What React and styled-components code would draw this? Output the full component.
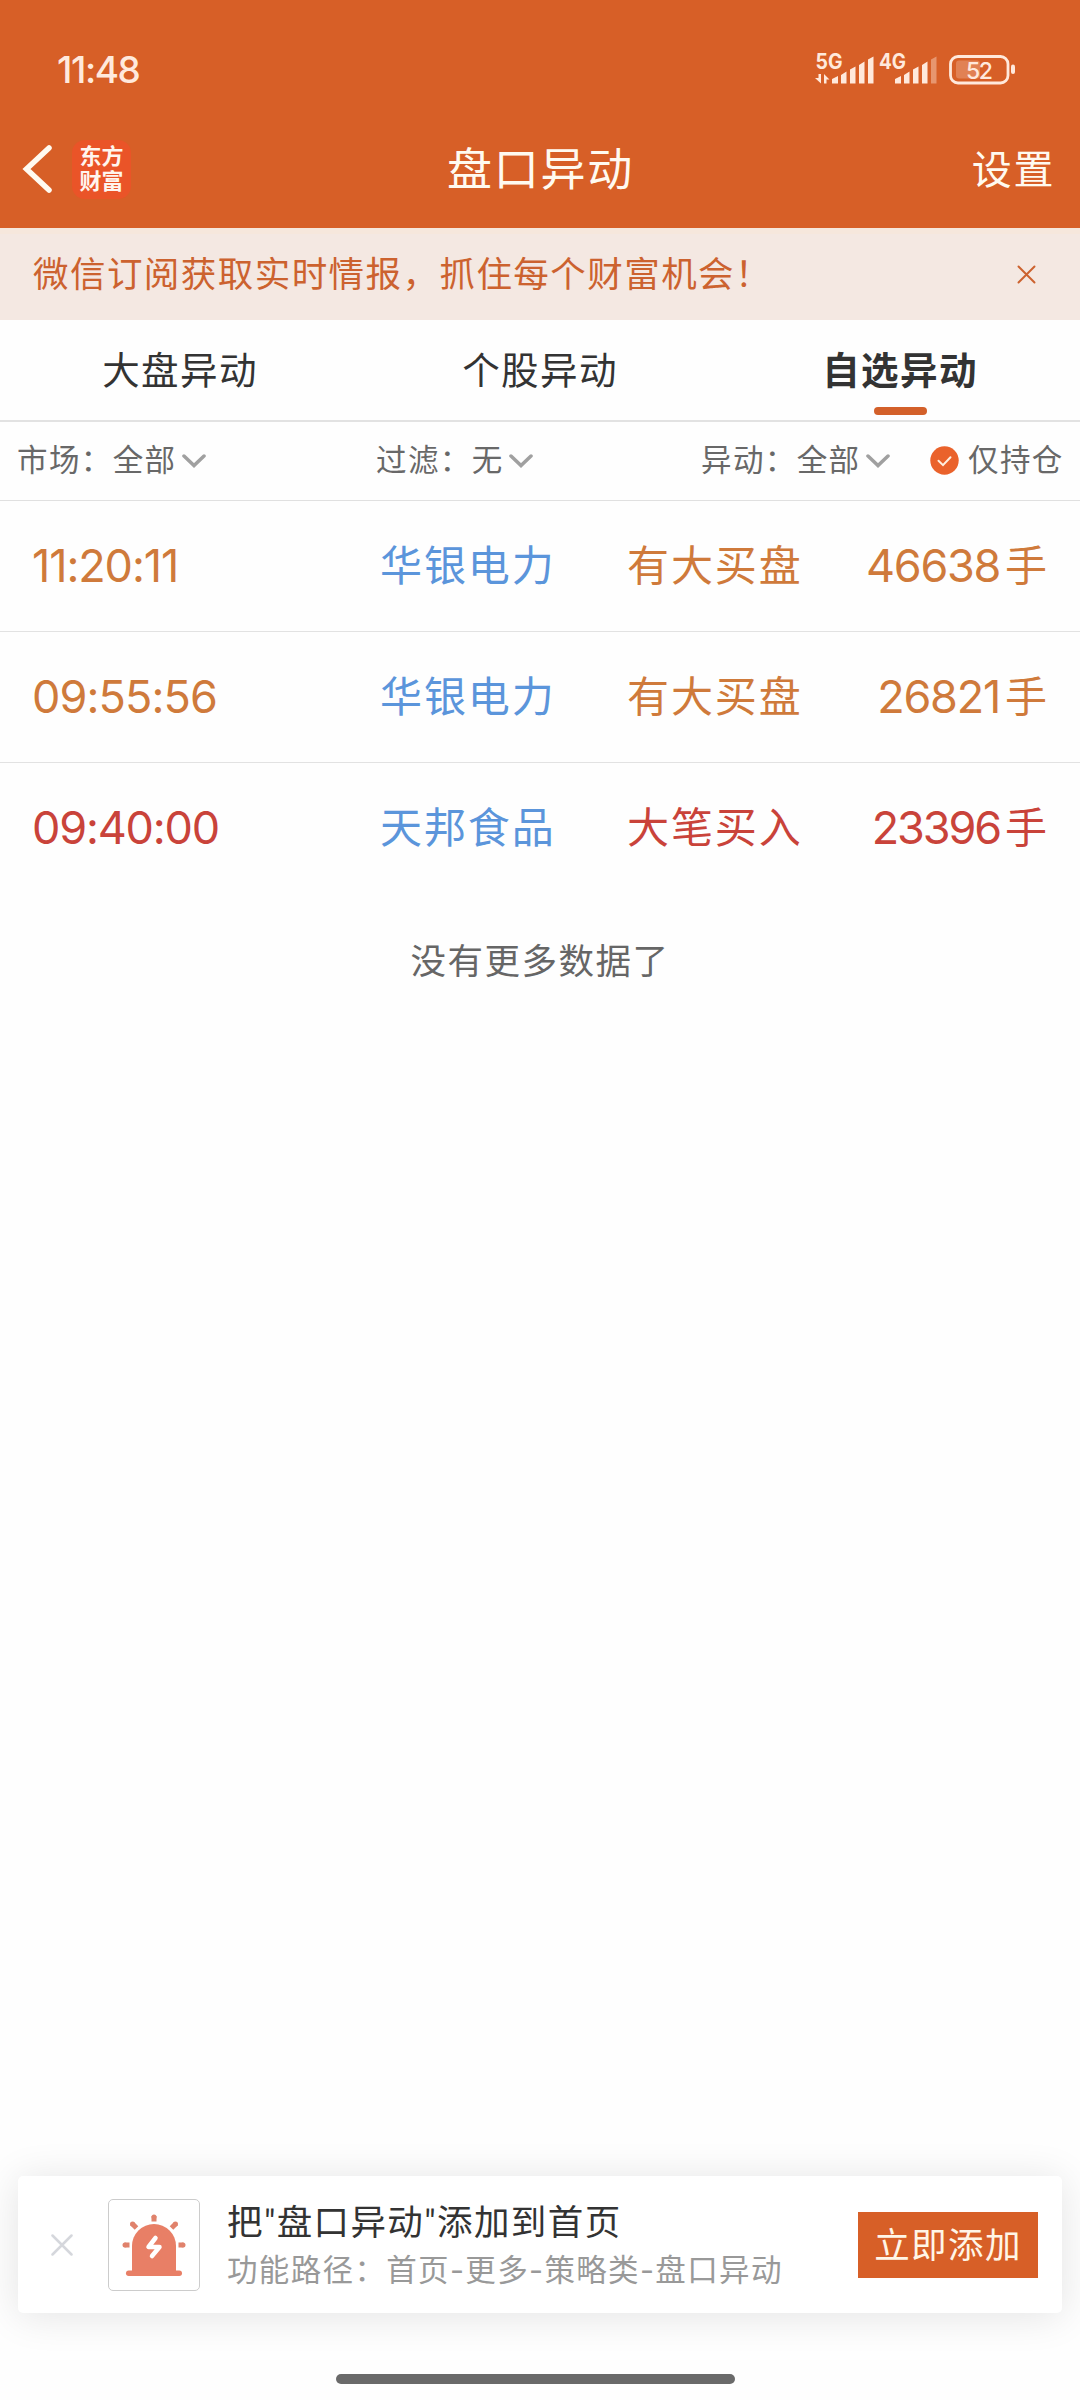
import React, { useState } from 'react';
import styled, { createGlobalStyle } from 'styled-components';

const GlobalStyle = createGlobalStyle`
  * {
    box-sizing: border-box;
  }
  body {
    margin: 0;
    background-color: #fefefe;
    font-family: Inter, 'Noto Sans CJK SC', sans-serif;
    line-height: 1.2;
    color: #333;
  }
`;

const Screen = styled.div`
  width: 1080px;
  height: 2400px;
  display: flex;
  flex-direction: column;
  background-color: #fefefe;
`;

const Header = styled.header`
  height: 228px;
  background-color: #d75f27;
  color: #fffaf0;
`;

const StatusBar = styled.div`
  height: 110px;
  padding: 30px 64px 0 57px;
  display: flex;
  align-items: center;
  justify-content: space-between;
  color: #ffe9dc;
`;

const Clock = styled.span`
  font-size: 37px;
  line-height: 40px;
  font-weight: 500;
  letter-spacing: -1.4px;
`;

const NavBar = styled.div`
  height: 118px;
  padding: 0 25px 0 22px;
  display: grid;
  grid-template-columns: 300px 1fr 296px;
  align-items: center;
`;

const NavLeft = styled.div`
  display: flex;
  align-items: center;
  gap: 20px;
`;

const Logo = styled.div`
  width: 59px;
  height: 59px;
  border-radius: 13px;
  background-color: #ea5428;
  color: #fff5ee;
  display: flex;
  align-items: center;
  justify-content: center;
  text-align: center;
  font-size: 22px;
  line-height: 25px;
  font-weight: 700;
`;

const Title = styled.h1`
  margin: 2px 0 0;
  font-size: 45px;
  font-weight: 400;
  letter-spacing: 1.8px;
  text-align: center;
`;

const Settings = styled.span`
  padding-top: 2px;
  font-size: 40px;
  letter-spacing: 1.6px;
  text-align: right;
`;

const Banner = styled.div`
  height: 92px;
  padding: 0 44px 5px 33px;
  display: flex;
  align-items: center;
  justify-content: space-between;
  background-color: #f4e8e2;
  border-top: 6px solid #f6e7dc;
  color: #cc622f;
  font-size: 35.5px;
  letter-spacing: 1.45px;

  span {
    padding-top: 1px;
  }
`;

const Tabs = styled.div`
  height: 102px;
  display: grid;
  grid-template-columns: repeat(3, 1fr);
  border-bottom: 2px solid #e2e2e2;
`;

const Tab = styled.button`
  position: relative;
  border: none;
  padding: 0;
  background: transparent;
  font: inherit;
  font-size: 37.5px;
  letter-spacing: 1.4px;
  color: #333;
  font-weight: ${(props) => (props.$active ? 700 : 400)};

  &::after {
    content: '';
    display: ${(props) => (props.$active ? 'block' : 'none')};
    position: absolute;
    left: 154px;
    bottom: 5px;
    width: 53px;
    height: 8px;
    border-radius: 4px;
    background-color: #d3602a;
  }
`;

const Filters = styled.div`
  height: 79px;
  padding: 0 17px 2px;
  display: grid;
  grid-template-columns: 359px 325px 229px 1fr;
  align-items: center;
  border-bottom: 1px solid #e0e0e0;
  color: #686868;
  font-size: 30.5px;
  letter-spacing: 1.4px;
`;

const Filter = styled.div`
  display: flex;
  align-items: center;
  gap: 5px;
  white-space: nowrap;

  svg {
    margin-top: 2px;
  }
`;

const HoldingOnly = styled.div`
  display: flex;
  align-items: center;
  gap: 9px;
  white-space: nowrap;
`;

const Row = styled.div`
  height: 131px;
  padding: 0 31px 0 32px;
  display: grid;
  grid-template-columns: 348px 247px 1fr auto;
  align-items: center;
  border-bottom: 1px solid ${(props) => (props.$last ? 'transparent' : '#e2e2e2')};
  color: ${(props) => (props.$tone === 'red' ? '#c9433a' : '#cf7a3b')};
  font-size: 42px;
  letter-spacing: 1.9px;
  line-height: 60px;
`;

const Digits = styled.span`
  font-size: 45px;
  letter-spacing: ${(props) => props.$spacing}px;
`;

const Stock = styled.span`
  color: #5b95db;
`;

const Volume = styled.div`
  display: flex;
  align-items: center;
  gap: 5px;
`;

const NoMore = styled.p`
  margin: 0;
  height: 132px;
  padding-top: 4px;
  display: flex;
  align-items: center;
  justify-content: center;
  color: #666;
  font-size: 35.5px;
  letter-spacing: 1.5px;
`;

const Promo = styled.section`
  margin: auto 18px 0;
  height: 137px;
  padding: 0 24px 0 33px;
  display: flex;
  align-items: center;
  border-radius: 5px;
  background-color: #fff;
  box-shadow: 0 3px 40px rgba(0, 0, 0, 0.11);
`;

const PromoIcon = styled.div`
  width: 92px;
  height: 92px;
  margin: 0 27px 0 35px;
  border: 1px solid #ccc;
  border-radius: 5px;
`;

const PromoText = styled.div`
  flex: 1;
  padding-top: 2px;
  white-space: nowrap;
`;

const PromoTitle = styled.div`
  font-family: Roboto, 'Noto Sans CJK SC', sans-serif;
  font-size: 35.5px;
  line-height: 48px;
  letter-spacing: 1.4px;
`;

const PromoPath = styled.div`
  font-size: 30.5px;
  line-height: 46px;
  letter-spacing: 1.35px;
  color: #999;
`;

const AddButton = styled.button`
  width: 180px;
  height: 66px;
  padding: 3px 0 0;
  border: none;
  background-color: #d75f27;
  color: #fff5e6;
  font: inherit;
  font-size: 35.5px;
  letter-spacing: 1.4px;
`;

const HomeIndicator = styled.div`
  width: 399px;
  height: 10px;
  margin: 61px 0 16px 336px;
  border-radius: 5px;
  background-color: #6a6a6a;
`;

const StatusIcons = () => (
  <svg width="201" height="40" viewBox="815 50 201 40" fill="#ffe9dc">
    <g fontFamily="Inter, sans-serif">
      <text x="815.5" y="68.5" fontSize="21" fontWeight="700" textLength="27" lengthAdjust="spacingAndGlyphs">5G</text>
      <text x="879" y="68.5" fontSize="21" fontWeight="700" textLength="27" lengthAdjust="spacingAndGlyphs">4G</text>
      <text x="966" y="78.5" fontSize="23" fontWeight="500" textLength="27">52</text>
    </g>
    <path d="M818.5 74h2.5v9.5l-6-5.5h3.5zM824 83.5v-9.5l5.5 5.5h-3v4z" />
    <path d="M832 79l6-3v7.5h-6zM841 75l5.5-3.5v12H841zM850 69.5l5.5-3v17H850zM859 65l5.5-3.5v22H859zM868 59.5l5.5-3v27H868z" />
    <path d="M895 79l6-3v7.5h-6zM904 75l5.5-3.5v12H904zM913 69.5l5.5-3v17H913zM922 65l5.5-3.5v22H922z" />
    <path d="M931 59.5l5.5-3v27H931z" opacity="0.4" />
    <rect x="950.5" y="56.5" width="57.5" height="26.5" rx="7.5" fill="none" stroke="#ffe9dc" strokeWidth="2.8" />
    <rect x="956" y="60.5" width="24" height="18" rx="3" opacity="0.25" />
    <rect x="1011" y="64.5" width="4" height="9.5" rx="2" />
  </svg>
);

const BackIcon = () => (
  <svg width="30" height="50" viewBox="0 0 30 50" fill="none" stroke="#fffaf0" strokeWidth="5.5" strokeLinecap="round">
    <path d="M27 4L4.5 25l22.5 21" />
  </svg>
);

const CloseIcon = ({ size, color, width }) => (
  <svg width={size} height={size} viewBox={`0 0 ${size} ${size}`} stroke={color} strokeWidth={width} strokeLinecap="round">
    <path d={`M1.5 1.5L${size - 1.5} ${size - 1.5}M${size - 1.5} 1.5L1.5 ${size - 1.5}`} />
  </svg>
);

const ChevronIcon = () => (
  <svg width="24" height="14" viewBox="0 0 24 14" fill="none" stroke="#a0a0a0" strokeWidth="3.5" strokeLinecap="round">
    <path d="M2 2l10 9.5L22 2" />
  </svg>
);

const CheckIcon = () => (
  <svg width="29" height="29" viewBox="0 0 29 29">
    <circle cx="14.5" cy="14.5" r="14.2" fill="#ea622b" />
    <path d="M8.5 14.8l4.5 4.3 7.5-7.8" fill="none" stroke="#fff0e0" strokeWidth="2" strokeLinecap="round" />
  </svg>
);

const SirenIcon = () => (
  <svg width="90" height="90" viewBox="109 2200 90 90" fill="#e87f66">
    <path d="M132 2271v-25a22 22 0 0 1 44 0v25z" />
    <rect x="126" y="2270.5" width="56" height="5.5" rx="2.7" />
    <g stroke="#e0826c" strokeWidth="5" fill="none">
      <path d="M154 2216v5.5M132 2223.5l4.5 4.5M176 2223.5l-4.5 4.5M124.5 2245h5M183.5 2245h-5" />
      <path d="M154 2217v.01M132.5 2224v.01M175.5 2224v.01M125 2245v.01M183 2245v.01" strokeLinecap="round" />
    </g>
    <path d="M155.5 2238l-7 9h11l-7.5 9" fill="none" stroke="#fff" strokeWidth="4.5" strokeLinecap="round" strokeLinejoin="round" />
  </svg>
);

const tabs = ['大盘异动', '个股异动', '自选异动'];

const filters = [
  { label: '市场', value: '全部' },
  { label: '过滤', value: '无' },
  { label: '异动', value: '全部' },
];

const records = [
  { time: '11:20:11', stock: '华银电力', type: '有大买盘', volume: '46638', tone: 'orange', timeSpacing: -1.1, volumeSpacing: -1.3 },
  { time: '09:55:56', stock: '华银电力', type: '有大买盘', volume: '26821', tone: 'orange', timeSpacing: -0.9, volumeSpacing: -1.2 },
  { time: '09:40:00', stock: '天邦食品', type: '大笔买入', volume: '23396', tone: 'red', timeSpacing: -1.2, volumeSpacing: -2.1 },
];

const App = () => {
  const [active, setActive] = useState('自选异动');

  return (
    <Screen>
      <GlobalStyle />
      <Header>
        <StatusBar>
          <Clock>11:48</Clock>
          <StatusIcons />
        </StatusBar>
        <NavBar>
          <NavLeft>
            <BackIcon />
            <Logo>东方<br />财富</Logo>
          </NavLeft>
          <Title>盘口异动</Title>
          <Settings>设置</Settings>
        </NavBar>
      </Header>
      <Banner>
        <span>微信订阅获取实时情报，抓住每个财富机会！</span>
        <CloseIcon size={19} color="#cc622f" width={2} />
      </Banner>
      <Tabs>
        {tabs.map((tab) => (
          <Tab key={tab} $active={tab === active} onClick={() => setActive(tab)}>{tab}</Tab>
        ))}
      </Tabs>
      <Filters>
        {filters.map(({ label, value }) => (
          <Filter key={label}>
            <span>{label}：{value}</span>
            <ChevronIcon />
          </Filter>
        ))}
        <HoldingOnly>
          <CheckIcon />
          <span>仅持仓</span>
        </HoldingOnly>
      </Filters>
      {records.map(({ time, stock, type, volume, tone, timeSpacing, volumeSpacing }, i) => (
        <Row key={time} $tone={tone} $last={i === records.length - 1}>
          <Digits $spacing={timeSpacing}>{time}</Digits>
          <Stock>{stock}</Stock>
          <span>{type}</span>
          <Volume>
            <Digits $spacing={volumeSpacing}>{volume}</Digits>
            <span>手</span>
          </Volume>
        </Row>
      ))}
      <NoMore>没有更多数据了</NoMore>
      <Promo>
        <CloseIcon size={22} color="#d5d7dc" width={2.5} />
        <PromoIcon>
          <SirenIcon />
        </PromoIcon>
        <PromoText>
          <PromoTitle>把"盘口异动"添加到首页</PromoTitle>
          <PromoPath>功能路径：首页-更多-策略类-盘口异动</PromoPath>
        </PromoText>
        <AddButton>立即添加</AddButton>
      </Promo>
      <HomeIndicator />
    </Screen>
  );
};

export default App;
